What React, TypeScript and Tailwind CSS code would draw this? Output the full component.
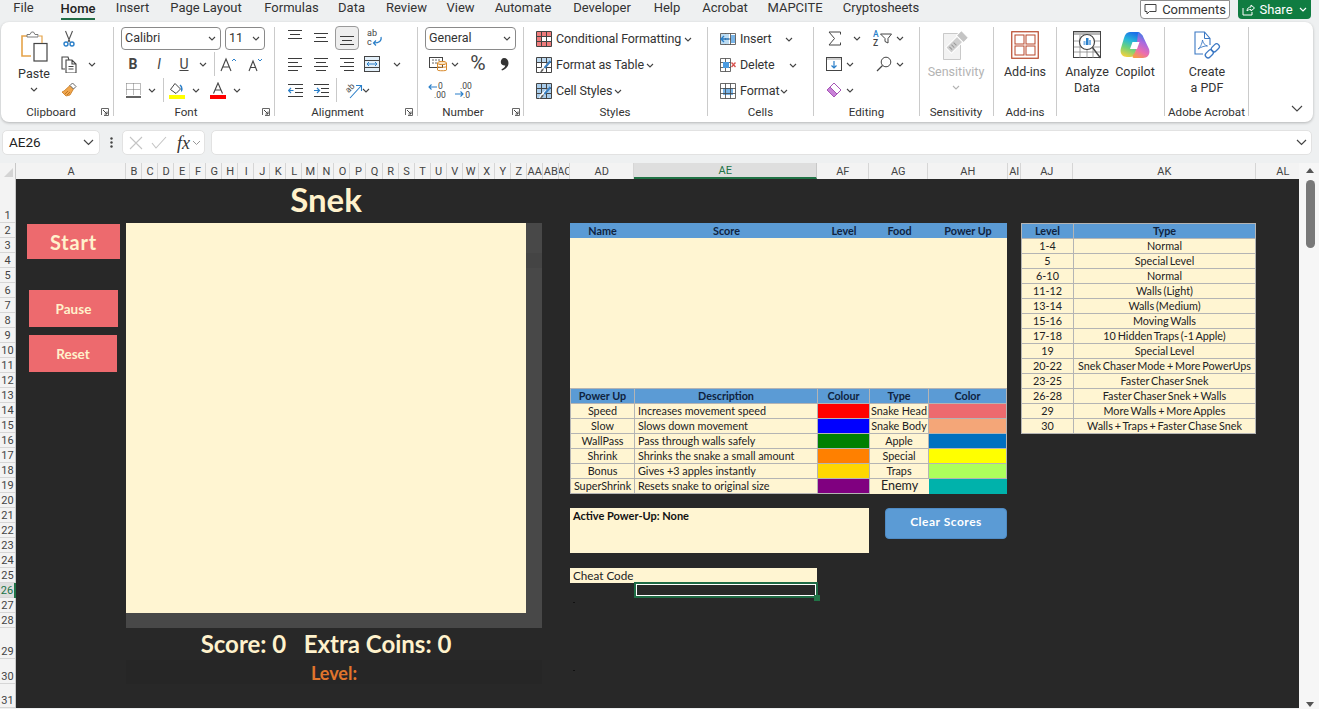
import React from "react";

type P = { c?: string; children?: React.ReactNode };
const S = ({ w = 16, h = 16, children }: { w?: number; h?: number; children?: React.ReactNode }) => (
  <svg width={w} height={h} viewBox={`0 0 ${w} ${h}`} fill="none" className="shrink-0">{children}</svg>
);
const Cell = ({ c = "", children }: P) => <div className={"flex items-center justify-center shrink-0 " + c}>{children}</div>;
const Chev = ({ color = "#444" }: { color?: string }) => (
  <svg width="8" height="5" viewBox="0 0 8 5" fill="none" className="shrink-0"><path d="M1 1l3 3 3-3" stroke={color} strokeWidth="1.1" /></svg>
);
const ChevC = ({ c = "" }: { c?: string }) => <Cell c={"w-[8px] " + c}><Chev /></Cell>;
const Sep = ({ c = "" }: { c?: string }) => <div className={"w-px h-[24px] bg-[#c9c9c9] shrink-0 " + c} />;
const R = ({ children }: P) => <div className="flex items-center h-[26px]">{children}</div>;
const L = "#3b3b3b";
const B = "#2a7fc9";

const Launcher = ({ c = "" }: { c?: string }) => (
  <svg width="8" height="8" viewBox="0 0 8 8" fill="none" className={"shrink-0 " + c}>
    <path d="M.5 7V.5H7.5V7.5H3" stroke="#666" /><path d="M2 2l4 4M6 3.5V6H3.5" stroke="#444" />
  </svg>
);

const Group = ({ w, label, lw, launcher, children }: { w: string; label?: string; lw?: string; launcher?: string; children?: React.ReactNode }) => (
  <div className={"h-[89px] border-r border-[#cbcbcb] shrink-0 flex flex-col " + w}>
    <div className="h-[78px] shrink-0">{children}</div>
    <div className="h-[14px] shrink-0 flex items-center text-[#333]">
      <div className={"text-center whitespace-nowrap text-[11.6px] leading-[14px] " + (lw || "")}>{label}</div>
      {launcher !== undefined && <Launcher c={launcher} />}
    </div>
  </div>
);

const Combo = ({ c, text }: { c: string; text: string }) => (
  <div className={"h-[23px] border border-[#8a8a8a] rounded-[4px] bg-white flex items-center justify-between pl-[3px] pr-[4px] text-[12.5px] text-[#333] shrink-0 " + c}>
    <span>{text}</span><Chev />
  </div>
);

/* icons */
const Paste = () => (
  <S w={28} h={31}>
    <path d="M9 5H2v20h9" stroke="#e5a349" strokeWidth="1.6" />
    <path d="M7 6V3.5h3l1.5-2.5h2l1.5 2.5h3V6z" fill="#fff" stroke="#7a7a7a" strokeWidth="1" />
    <rect x="14" y="12.5" width="13" height="17.5" fill="#fff" stroke="#444" strokeWidth="1.2" />
    <path d="M19 5h3v7" stroke="#e5a349" strokeWidth="1.2" />
  </S>
);
const Cut = () => (
  <S w={12} h={17}>
    <path d="M2.5 1l4.5 11M9.5 1L5 12" stroke="#555" strokeWidth="1.1" />
    <circle cx="3" cy="14" r="2" stroke={B} strokeWidth="1.4" /><circle cx="9" cy="14" r="2" stroke={B} strokeWidth="1.4" />
  </S>
);
const Copy = () => (
  <S w={16} h={17}>
    <path d="M4 13H1V1h6l1 3" stroke="#444" strokeWidth="1.1" />
    <path d="M5 4h6l4 4v9H5zM11 4v4h4M7.5 10.5h5M7.5 13h5" stroke="#444" strokeWidth="1.1" />
  </S>
);
const Painter = () => (
  <S w={16} h={16}>
    <path d="M9 3.5l3.5 3.5L9 13 5 14 1 10l2-1z" fill="#f0a64d" stroke="#c77a22" strokeWidth=".8" />
    <path d="M9 3.5l2.5-2.5 3.5 3.5-2.5 2.5z" fill="#fff" stroke="#666" />
    <path d="M4 12l3-3M6 13l3-3" stroke="#b56a17" strokeWidth=".8" />
  </S>
);
const Borders = () => (
  <S w={15} h={15}>
    <path d="M.5.5h14M.5.5v12M14.5.5v12M7.5.5v12M.5 6.5h14" stroke="#777" strokeDasharray="1 1" />
    <path d="M0 14h15" stroke="#222" strokeWidth="1.4" />
  </S>
);
const Fill = () => (
  <S w={16} h={17}>
    <path d="M6 1.5l5.5 5.5L7 11.5 1.5 7.5z" stroke="#444" fill="#fff" />
    <path d="M12 9c1 0 1.5-4-1-6" stroke={B} strokeWidth="1.6" />
    <rect x="0" y="13" width="16" height="4" fill="#ffff00" />
  </S>
);
const FontA = () => (
  <S w={16} h={17}>
    <path d="M3.5 11.5L8 1l4.5 10.5M5 8h6" stroke="#444" strokeWidth="1.1" />
    <rect x="0" y="13" width="16" height="4" fill="#ff0000" />
  </S>
);
const AUp = ({ up }: { up: boolean }) => (
  <S w={up ? 16 : 14} h={15}>
    <path d={up ? "M1 14L6 2l5 12M3 10h6" : "M1 14L5 4l4 10M2.7 10.5h5"} stroke="#444" strokeWidth="1.1" />
    <path d={up ? "M12 4l2-2 2 2" : "M10 2l2 2 2-2"} stroke={B} strokeWidth="1" />
  </S>
);
const Lines = ({ a }: { a: "l" | "c" | "r" | "t" | "m" | "b" }) => {
  const p: Record<string, string> = {
    l: "M0 2.5h14M0 6.5h10M0 10.5h14M0 14.5h10",
    c: "M0 2.5h14M2 6.5h10M0 10.5h14M2 14.5h10",
    r: "M0 2.5h14M4 6.5h10M0 10.5h14M4 14.5h10",
    t: "M0 .5h14M2 4.5h10M0 8.5h14",
    m: "M0 3.5h14M2 7.5h10M0 11.5h14",
    b: "M0 6.5h14M2 10.5h10M0 14.5h14",
  };
  return <S w={14} h={16}><path d={p[a]} stroke={L} strokeWidth="1" /></S>;
};
const Wrap = () => (
  <svg width="18" height="20" viewBox="0 0 18 20" fill="none" className="shrink-0">
    <text x="2" y="8" fontSize="9" fill="#444" fontFamily="Roboto">ab</text>
    <text x="2" y="17" fontSize="9" fill="#444" fontFamily="Roboto">c</text>
    <path d="M16 9c1 4-2 6-7 6M11 12.5L8.5 15l2.5 2.5" stroke={B} strokeWidth="1.2" />
  </svg>
);
const Merge = () => (
  <S w={16} h={16}>
    <rect x=".5" y=".5" width="15" height="15" fill="#e3f0fa" stroke="#444" />
    <path d="M.5 4.5h15M.5 11.5h15" stroke="#444" />
    <path d="M3 8h10M5 6L3 8l2 2M11 6l2 2-2 2" stroke={B} />
  </S>
);
const Indent = ({ out }: { out: boolean }) => (
  <S w={15} h={15}>
    <path d="M0 1.5h15M7 5.5h8M7 9.5h8M0 13.5h15" stroke={L} />
    <path d={out ? "M5.5 7.5H.5M3 5L.5 7.5 3 10" : "M0 7.5h5.5M3 5l2.5 2.5L3 10"} stroke={B} strokeWidth="1.2" />
  </S>
);
const Orient = () => (
  <svg width="20" height="20" viewBox="0 0 20 20" fill="none" className="shrink-0">
    <text x="3" y="11" fontSize="8.5" fill="#444" fontFamily="Roboto" transform="rotate(-45 7 9)">ab</text>
    <path d="M7 18L18 6M13 5.5h5.5V11" stroke={B} strokeWidth="1.1" />
  </svg>
);
const Accounting = () => (
  <S w={18} h={16}>
    <rect x=".5" y="1.5" width="13" height="10" fill="#fff" stroke="#444" />
    <path d="M3 4h8M3 7h6" stroke="#666" strokeDasharray="2 1" />
    <ellipse cx="13" cy="7" rx="4.5" ry="1.7" fill="#fbe3c2" stroke="#d98a2b" />
    <path d="M8.5 7v7c0 1 9 1 9 0V7M8.5 10.5c0 1 9 1 9 0" stroke="#d98a2b" fill="none" />
  </S>
);
const Dec = ({ inc }: { inc: boolean }) => (
  <svg width="20" height="19" viewBox="0 0 20 19" fill="none" className="shrink-0">
    {inc ? (
      <>
        <text x="7" y="8" fontSize="8.5" fill="#444" fontFamily="Roboto">.00</text>
        <text x="10" y="17" fontSize="8.5" fill="#444" fontFamily="Roboto">.0</text>
        <path d="M2 13h8M7.5 10.5L10 13l-2.5 2.5" stroke={B} strokeWidth="1.1" />
      </>
    ) : (
      <>
        <text x="11" y="8" fontSize="8.5" fill="#444" fontFamily="Roboto">0</text>
        <text x="7" y="17" fontSize="8.5" fill="#444" fontFamily="Roboto">.00</text>
        <path d="M2 6h8M4.5 3.5L2 6l2.5 2.5" stroke={B} strokeWidth="1.1" />
      </>
    )}
  </svg>
);
const Comma = () => (
  <S w={9} h={14}>
    <path d="M4 1c2.7 0 4.5 2 4.5 5 0 3.5-2.7 6-6.5 7.5l-.6-1.1c2.100-1 3.500-2.300 3.900-3.900C2.500 8.700.8 7.300.8 5 .8 2.700 2.200 1 4 1z" fill="#333" />
  </S>
);
const GridI = ({ kind }: { kind: "cf" | "tbl" | "cs" | "ins" | "del" | "fmt" }) => {
  const g = "M.5 .5h15v15H.5zM5.5 .5v15M10.5 .5v15M.5 5.5h15M.5 10.5h15";
  return (
    <S w={16} h={16}>
      {kind === "cf" && <path d="M1 1h14v4H1zM1 11h14v4H1zM1 5h5v6H1z" fill="#ef7b7b" />}
      {kind === "tbl" && <path d="M1 1h14v4H1z" fill="#bcd9f0" />}
      {kind === "cs" && <path d="M1 1h14v14H1z" fill="#a9cdec" />}
      {kind === "fmt" && <path d="M3 5h10v7H3z" fill="#79b5e8" />}
      {(kind === "cf" || kind === "tbl" || kind === "cs" || kind === "fmt") && <path d={g} stroke="#444" strokeWidth={kind === "fmt" ? 0.8 : 1} />}
      {(kind === "tbl" || kind === "cs") && (
        <>
          <path d="M15 3L8 11l-2 3-3 1.5 1-3 2-2.5z" fill="#fff" />
          <path d="M14.5 4L8.5 11" stroke="#3a7fc0" strokeWidth="2" />
          <path d="M8 11l-2.5 1.5L4 15.5l3-1.5z" fill="#666" />
        </>
      )}
      {kind === "ins" && (
        <>
          <path d="M.5 2.5h15v11H.5zM5.5 2.5v11M10.5 2.5v11M.5 8h15" stroke="#444" strokeWidth=".8" />
          <path d="M1 3h8v4H1zM1 9h8v4H1z" fill="#bcdcf3" />
          <path d="M9 8H1M4 5L1 8l3 3" stroke="#2a7fc9" strokeWidth="1.4" />
          <path d="M11 4h4v8h-4z" fill="#79b5e8" />
        </>
      )}
      {kind === "del" && (
        <>
          <path d="M.5 1.5h10v13H.5zM5.5 1.5v13M.5 5.5h10M.5 10.5h10" stroke="#444" strokeWidth=".8" />
          <path d="M3 5h6v6H3z" fill="#4b9be0" />
          <path d="M11.5 5.5l4 4.5M15.5 5.5l-4 4.5" stroke="#d9534f" strokeWidth="1.4" />
        </>
      )}
    </S>
  );
};
const Sigma = () => <S w={13} h={15}><path d="M12.5 3.5V1H1l5.5 6.5L1 14h11.5v-2.500" stroke="#444" strokeWidth="1" /></S>;
const FillDown = () => (
  <S w={16} h={14}>
    <rect x=".5" y=".5" width="15" height="13" stroke="#444" /><path d="M1 1h14v2H1z" fill="#cfcfcf" />
    <path d="M8 4v7M5.5 8.5L8 11l2.5-2.5" stroke={B} strokeWidth="1.2" />
  </S>
);
const Sort = () => (
  <svg width="20" height="18" viewBox="0 0 20 18" fill="none" className="shrink-0">
    <text x="0" y="8" fontSize="8.5" fill={B} fontFamily="Roboto" fontWeight="500">A</text>
    <text x="0" y="17" fontSize="8.5" fill="#444" fontFamily="Roboto" fontWeight="500">Z</text>
    <path d="M7.5 5h11L15 9.5V14l-3-1.5v-3z" stroke="#444" />
  </svg>
);
const Find = () => <S w={16} h={16}><circle cx="10" cy="6" r="4.8" stroke="#444" /><path d="M6.5 9.5L1 15" stroke="#444" strokeWidth="1.2" /></S>;
const Eraser = () => (
  <S w={16} h={16}>
    <path d="M8 1l7 7-4 4-7-7z" fill="#fff" stroke="#a554b5" />
    <path d="M4 5l7 7-3 3-7-7z" fill="#c982d8" stroke="#a554b5" />
  </S>
);
const Sens = () => (
  <S w={27} h={30}>
    <path d="M0 3h17v27H0z" fill="#f2f2f2" /><path d="M.5 3.5h17v26H.5z" stroke="#c9c9c9" />
    <g transform="rotate(-45 12 14)">
      <path d="M3 10h16v8H3z" fill="#cfcfcf" stroke="#fff" />
      <path d="M6 12v4M9 12v4M12 12v4" stroke="#9a9a9a" />
      <path d="M19 9h7v10h-7z" fill="#c4c4c4" stroke="#fff" />
    </g>
  </S>
);
const AddIns = () => (
  <S w={28} h={28}>
    <rect x=".75" y=".75" width="26.5" height="26.5" stroke="#b7472a" strokeWidth="1.2" />
    <rect x="4" y="4" width="9" height="9" stroke="#b7472a" /><rect x="15" y="4" width="9" height="9" stroke="#b7472a" />
    <rect x="4" y="15" width="9" height="9" stroke="#b7472a" /><rect x="15" y="15" width="9" height="9" stroke="#b7472a" />
  </S>
);
const Analyze = () => (
  <S w={28} h={28}>
    <rect x=".5" y=".5" width="27" height="26" fill="#fff" stroke="#444" />
    <path d="M1 1h26v3H1z" fill="#b8b8b8" />
    <path d="M1 10h26M1 16h26M1 21h26M7 4v23M14 16v11M20 16v11" stroke="#888" strokeWidth=".8" />
    <circle cx="14" cy="11" r="7.5" fill="#fff" stroke="#444" strokeWidth="1.2" />
    <path d="M10.5 10h2v4h-2z" fill="#7fb5e6" /><path d="M13 7h2.5v7H13z" fill="#2a7fc9" /><path d="M16 9h2v5h-2z" fill="#7fb5e6" />
    <path d="M19.5 16.5L27.5 27" stroke="#444" strokeWidth="1.4" />
  </S>
);
const Copilot = () => (
  <svg width="30" height="28" viewBox="0 0 30 28" className="shrink-0">
    <defs>
      <linearGradient id="cpA" x1="0.6" y1="0" x2="0.3" y2="1">
        <stop offset="0" stopColor="#1b6fe8" /><stop offset=".35" stopColor="#27b8d8" /><stop offset=".65" stopColor="#6fd27a" /><stop offset="1" stopColor="#f3d13f" />
      </linearGradient>
      <linearGradient id="cpB" x1="0.7" y1="0" x2="0.3" y2="1">
        <stop offset="0" stopColor="#2a7de8" /><stop offset=".35" stopColor="#a86be0" /><stop offset=".7" stopColor="#ec6db0" /><stop offset="1" stopColor="#f59a4b" />
      </linearGradient>
    </defs>
    <path d="M10 1h8c2 0 3 1.5 2.5 3.5L16 20c-1 4-3 6-6 6H7c-5 0-7.5-4-6-9L4 7c1-4 3-6 6-6z" fill="url(#cpA)" />
    <path d="M18 2c3 0 4.5 1.5 5.5 4.5L29 18c1.5 5-1 9-6 9h-8c-2.5 0-3-1.5-2-3 2-2 2.5-4 3.5-7z" fill="url(#cpB)" />
    <path d="M12.5 11h7l-2.5 7h-7z" fill="#fff" />
  </svg>
);
const Pdf = () => (
  <S w={27} h={29}>
    <path d="M16 14V7.5L10.5 1H1v22h8" stroke="#3b78c4" strokeWidth="1.1" />
    <path d="M10.5 1v6.5H16" stroke="#3b78c4" strokeWidth="1" />
    <path d="M4 18c2-1 4-5 4.5-9 .5 3 2 5 5 6-3-.2-6 .8-9.5 3z" stroke="#3b78c4" strokeWidth=".9" />
    <g stroke="#3b78c4" strokeWidth="1.3" fill="none">
      <rect x="17" y="14" width="9" height="5.5" rx="2.7" transform="rotate(-45 21.5 17)" />
      <rect x="11" y="20" width="9" height="5.5" rx="2.7" transform="rotate(-45 15.5 23)" />
    </g>
  </S>
);

const SmallRow = ({ icon, text, tw, chev }: { icon: React.ReactNode; text: string; tw?: string; chev?: string }) => (
  <div className="flex items-center h-[26px] pl-[12px]">
    {icon}
    <span className={"ml-[4px] text-[12.5px] tracking-[-0.1px] whitespace-nowrap text-[#333] " + (tw || "")}>{text}</span>
    <Cell c={"w-[8px] " + (chev || "")}><Chev /></Cell>
  </div>
);

const Big = ({ c, icon, lines, gray, chev }: { c: string; icon: React.ReactNode; lines: string[]; gray?: boolean; chev?: boolean }) => (
  <div className={"flex flex-col items-center pt-[4px] shrink-0 " + c}>
    <div className="h-[28px] flex items-center">{icon}</div>
    <div className={"mt-[5px] flex flex-col items-center text-[12.5px] leading-[16px] whitespace-nowrap " + (gray ? "text-[#b3b3b3]" : "text-[#333]")}>
      {lines.map((l) => <span key={l}>{l}</span>)}
    </div>
    {chev && <div className="mt-[5px]"><Chev color="#b3b3b3" /></div>}
  </div>
);

const tabs: [string, string][] = [
  ["File", "w-[47px]"], ["Home", "w-[62px]"], ["Insert", "w-[47px]"], ["Page Layout", "w-[100px]"], ["Formulas", "w-[71px]"],
  ["Data", "w-[49px]"], ["Review", "w-[61px]"], ["View", "w-[47px]"], ["Automate", "w-[78px]"], ["Developer", "w-[80px]"],
  ["Help", "w-[50px]"], ["Acrobat", "w-[66px]"], ["MAPCITE", "w-[74px]"], ["Cryptosheets", "w-[98px]"],
];

const Ribbon = () => (
  <div className="ml-px w-[1312px] h-[100px] bg-white rounded-lg shadow-[0_1px_3px_rgba(0,0,0,0.25)] flex pt-[5px] shrink-0">
    <Group w="w-[113px]" label="Clipboard" lw="w-[100px]" launcher="">
      <div className="flex -mt-[2px]">
        <div className="ml-[6px] w-[54px] flex flex-col items-center pt-[6px] shrink-0">
          <Paste />
          <span className="text-[12.5px] leading-[16px] mt-[4px] text-[#333]">Paste</span>
          <div className="mt-[5px]"><Chev /></div>
        </div>
        <div className="flex flex-col">
          <R><Cell c="w-[16px]"><Cut /></Cell></R>
          <R><Cell c="w-[16px]"><Copy /></Cell><ChevC c="ml-[11px]" /></R>
          <R><Cell c="w-[16px]"><Painter /></Cell></R>
        </div>
      </div>
    </Group>
    <Group w="w-[161px]" label="Font" lw="w-[144px]" launcher="ml-[4px]">
      <div className="flex flex-col -mt-[2px]">
        <R><Combo c="ml-[7px] w-[100px]" text="Calibri" /><Combo c="ml-[4px] w-[40px]" text="11" /></R>
        <R>
          <Cell c="ml-[9px] w-[20px] font-bold text-[14px] text-[#444]">B</Cell>
          <Cell c="ml-[6px] w-[20px] italic text-[14px] text-[#444]">I</Cell>
          <Cell c="ml-[5px] w-[20px] underline text-[14px] text-[#444]">U</Cell>
          <ChevC c="ml-[5px]" /><Sep c="ml-[7px]" />
          <Cell c="ml-[3px] w-[20px]"><AUp up /></Cell><Cell c="ml-[7px] w-[20px]"><AUp up={false} /></Cell>
        </R>
        <R>
          <Cell c="ml-[9px] w-[20px]"><Borders /></Cell><ChevC c="ml-[5px]" /><Sep c="ml-[7px]" />
          <Cell c="ml-[3px] w-[20px]"><Fill /></Cell><ChevC c="ml-[5px]" />
          <Cell c="ml-[8px] w-[20px]"><FontA /></Cell><ChevC c="ml-[5px]" />
        </R>
      </div>
    </Group>
    <Group w="w-[143px]" label="Alignment" lw="w-[125px]" launcher="ml-[5px]">
      <div className="flex flex-col -mt-[2px]">
        <R>
          <Cell c="ml-[10px] w-[20px]"><Lines a="t" /></Cell><Cell c="ml-[6px] w-[20px]"><Lines a="m" /></Cell>
          <Cell c="ml-[4px] w-[24px] h-[24px] bg-[#eeeeee] border border-[#9a9a9a] rounded-[4px]"><Lines a="b" /></Cell>
          <Cell c="ml-[5px] w-[20px]"><Wrap /></Cell>
        </R>
        <R>
          <Cell c="ml-[10px] w-[20px]"><Lines a="l" /></Cell><Cell c="ml-[6px] w-[20px]"><Lines a="c" /></Cell>
          <Cell c="ml-[6px] w-[20px]"><Lines a="r" /></Cell><Cell c="ml-[5px] w-[20px]"><Merge /></Cell><ChevC c="ml-[11px]" />
        </R>
        <R>
          <Cell c="ml-[10px] w-[20px]"><Indent out /></Cell><Cell c="ml-[6px] w-[20px]"><Indent out={false} /></Cell><Sep c="ml-[5px]" />
          <Cell c="ml-[6px] w-[20px]"><Orient /></Cell><ChevC c="-ml-[1px]" />
        </R>
      </div>
    </Group>
    <Group w="w-[106px]" label="Number" lw="w-[90px]" launcher="ml-[4px]">
      <div className="flex flex-col -mt-[2px]">
        <R><Combo c="ml-[7px] w-[91px]" text="General" /></R>
        <R>
          <Cell c="ml-[10px] w-[20px]"><Accounting /></Cell><ChevC c="ml-[3px]" />
          <Cell c="ml-[9px] w-[20px] text-[21px] text-[#444]">%</Cell>
          <Cell c="ml-[6px] w-[20px]"><Comma /></Cell>
        </R>
        <R><Cell c="ml-[9px] w-[20px]"><Dec inc={false} /></Cell><Cell c="ml-[6px] w-[20px]"><Dec inc /></Cell></R>
      </div>
    </Group>
    <Group w="w-[184px]" label="Styles" lw="w-[182px]">
      <div className="flex flex-col -mt-[1px]">
        <SmallRow icon={<GridI kind="cf" />} text="Conditional Formatting" chev="ml-[3px]" />
        <SmallRow icon={<GridI kind="tbl" />} text="Format as Table" chev="ml-[2px]" />
        <SmallRow icon={<GridI kind="cs" />} text="Cell Styles" chev="ml-[2px]" />
      </div>
    </Group>
    <Group w="w-[106px]" label="Cells" lw="w-[106px]">
      <div className="flex flex-col -mt-[1px]">
        <SmallRow icon={<GridI kind="ins" />} text="Insert" tw="w-[45px]" />
        <SmallRow icon={<GridI kind="del" />} text="Delete" tw="w-[49px]" />
        <SmallRow icon={<GridI kind="fmt" />} text="Format" tw="w-[40px]" />
      </div>
    </Group>
    <Group w="w-[106px]" label="Editing" lw="w-[106px]">
      <div className="flex flex-col -mt-[2px]">
        <R><Cell c="ml-[10px] w-[20px]"><Sigma /></Cell><ChevC c="ml-[9px]" /><Cell c="ml-[12px] w-[20px]"><Sort /></Cell><ChevC c="ml-[3px]" /></R>
        <R><Cell c="ml-[10px] w-[20px]"><FillDown /></Cell><ChevC c="ml-[2px]" /><Cell c="ml-[20px] w-[20px]"><Find /></Cell><ChevC c="ml-[2px]" /></R>
        <R><Cell c="ml-[10px] w-[20px]"><Eraser /></Cell><ChevC c="ml-[2px]" /></R>
      </div>
    </Group>
    <Group w="w-[74px]" label="Sensitivity" lw="w-[72px]">
      <Big c="w-[72px]" icon={<Sens />} lines={["Sensitivity"]} gray chev />
    </Group>
    <Group w="w-[63px]" label="Add-ins" lw="w-[62px]">
      <Big c="w-[62px]" icon={<AddIns />} lines={["Add-ins"]} />
    </Group>
    <Group w="w-[108px]">
      <div className="flex">
        <Big c="w-[60px]" icon={<Analyze />} lines={["Analyze", "Data"]} />
        <Big c="w-[36px]" icon={<Copilot />} lines={["Copilot"]} />
      </div>
    </Group>
    <Group w="w-[84px]" label="Adobe Acrobat" lw="w-[84px]">
      <Big c="w-[84px]" icon={<Pdf />} lines={["Create", "a PDF"]} />
    </Group>
    <div className="flex-1 flex justify-end items-end pr-[10px] pb-[10px]">
      <svg width="12" height="7" viewBox="0 0 12 7" fill="none"><path d="M1 1l5 5 5-5" stroke="#444" strokeWidth="1.1" /></svg>
    </div>
  </div>
);

const FormulaBar = () => (
  <div className="flex mt-[8px] h-[25px] shrink-0 items-stretch">
    <div className="ml-[2px] w-[98px] bg-white rounded-[5px] border border-[#e2e2e2] flex items-center justify-between pl-[6px] pr-[5px] text-[13.5px] text-[#222]">
      <span>AE26</span>
      <svg width="11" height="7" viewBox="0 0 11 7" fill="none"><path d="M1 1l4.5 4.5L10 1" stroke="#444" strokeWidth="1.2" /></svg>
    </div>
    <div className="w-[22px] flex items-center justify-center">
      <svg width="3" height="11" viewBox="0 0 3 11"><circle cx="1.5" cy="1.5" r="1.2" fill="#444" /><circle cx="1.5" cy="5.5" r="1.2" fill="#444" /><circle cx="1.5" cy="9.5" r="1.2" fill="#444" /></svg>
    </div>
    <div className="w-[83px] bg-white rounded-[5px] border border-[#e2e2e2] flex items-center pl-[6px]">
      <svg width="14" height="14" viewBox="0 0 14 14" fill="none"><path d="M1 1l12 12M13 1L1 13" stroke="#c4c4c4" strokeWidth="1.1" /></svg>
      <svg width="16" height="13" viewBox="0 0 16 13" fill="none" className="ml-[8px]"><path d="M1 7l4 5L15 1" stroke="#c4c4c4" strokeWidth="1.1" /></svg>
      <span className="ml-[10px] font-['Liberation_Serif',serif] italic text-[18px] text-[#333] leading-none">fx</span>
      <svg width="9" height="6" viewBox="0 0 9 6" fill="none" className="ml-[2px]"><path d="M1 1l3.5 3.5L8 1" stroke="#999" strokeWidth="1" /></svg>
    </div>
    <div className="ml-[6px] w-[1101px] bg-white rounded-[5px] border border-[#e2e2e2] flex items-center justify-end pr-[4px]">
      <svg width="11" height="7" viewBox="0 0 11 7" fill="none"><path d="M1 1l4.5 4.5L10 1" stroke="#444" strokeWidth="1.2" /></svg>
    </div>
  </div>
);

const cols = ["A", ..."BCDEFGHIJKLMNOPQRSTUVWXYZ".split(""), "AA", "AB", "AC", "AD", "AE", "AF", "AG", "AH", "AI", "AJ", "AK", "AL"];

const ColHeader = () => (
  <div className="flex h-[16px] bg-[#f3f3f3] shrink-0 overflow-hidden">
    <div className="w-[16px] border-r border-[#c8c8c8] flex items-end justify-end p-[2px] shrink-0">
      <div className="w-0 h-0 border-l-[9px] border-l-transparent border-b-[9px] border-b-[#d4d4d4]" />
    </div>
    <div className="grid grid-cols-[110px_repeat(25,16.04px)_16px_16px_11px_64px_183px_52px_59px_80px_13px_52px_183px_54px] shrink-0">
      {cols.map((c) => (
        <div key={c} className={"flex items-center justify-center overflow-hidden whitespace-nowrap border-r pl-px pt-[2px] text-[11px] " + (c === "AE" ? "bg-[#dedede] text-[#217346] border-[#c8c8c8] border-b-2 border-b-[#217346]" : "text-[#444] border-[#d6d6d6]")}>{c}</div>
      ))}
    </div>
  </div>
);

const rowH = (n: number) => (n === 1 ? "h-[44px]" : n === 29 ? "h-[31px]" : n === 30 ? "h-[25px]" : n === 31 ? "h-[24px]" : "h-[15px]");
const RowHeader = () => (
  <div className="w-[16px] flex flex-col bg-[#f3f3f3] shrink-0">
    {Array.from({ length: 31 }, (_, i) => i + 1).map((n) => (
      <div key={n} className={"flex items-end justify-center leading-[14px] text-[11px] shadow-[inset_0_-1px_0_#d6d6d6] " + rowH(n) + (n === 26 ? " bg-[#dedede] text-[#217346] border-r-2 border-r-[#217346]" : " text-[#444] border-r border-r-[#c8c8c8]")}>{n}</div>
    ))}
  </div>
);

const Btn = ({ c, text }: { c: string; text: string }) => (
  <div className={"bg-[#ed6a6e] text-[#fff2cc] font-bold flex items-center justify-center " + c}>{text}</div>
);

const cellB = "border-r border-b border-[#b4b4b4] flex items-center overflow-hidden whitespace-nowrap";
const powers: [string, string, string, string, string][] = [
  ["Speed", "Increases movement speed", "bg-[#ff0000]", "Snake Head", "bg-[#ed6a6e]"],
  ["Slow", "Slows down movement", "bg-[#0000ff]", "Snake Body", "bg-[#f4a678]"],
  ["WallPass", "Pass through walls safely", "bg-[#008000]", "Apple", "bg-[#0070c0]"],
  ["Shrink", "Shrinks the snake a small amount", "bg-[#ff8000]", "Special", "bg-[#ffff00]"],
  ["Bonus", "Gives +3 apples instantly", "bg-[#ffd700]", "Traps", "bg-[#adff5c]"],
  ["SuperShrink", "Resets snake to original size", "bg-[#800080]", "Enemy", "bg-[#00b2ab]"],
];
const levels: [string, string][] = [
  ["1-4", "Normal"], ["5", "Special Level"], ["6-10", "Normal"], ["11-12", "Walls (Light)"], ["13-14", "Walls (Medium)"],
  ["15-16", "Moving Walls"], ["17-18", "10 Hidden Traps (-1 Apple)"], ["19", "Special Level"], ["20-22", "Snek Chaser Mode + More PowerUps"],
  ["23-25", "Faster Chaser Snek"], ["26-28", "Faster Chaser Snek + Walls"], ["29", "More Walls + More Apples"], ["30", "Walls + Traps + Faster Chase Snek"],
];
const Head = ({ t }: { t: string }) => <div className={"bg-[#5b9bd5] font-bold text-[#0f2340] justify-center " + cellB}>{t}</div>;
const Td = ({ t, left }: { t: string; left?: boolean }) => <div className={"bg-[#fff5d2] text-[#222] " + cellB + (left ? " pl-[3px]" : " justify-center")}>{t}</div>;

const Sheet = () => (
  <div className="flex-1 bg-[#282828] flex font-['Lato',sans-serif] text-[10.8px] leading-none">
    <div className="w-[110px] shrink-0 flex flex-col pt-[45px]">
      <Btn c="ml-[11px] w-[93px] h-[35px] text-[20px] tracking-[0.8px]" text="Start" />
      <Btn c="ml-[13px] mt-[31px] w-[89px] h-[37px] pt-[2px] text-[13.5px]" text="Pause" />
      <Btn c="ml-[13px] mt-[8px] w-[88px] h-[37px] pt-[2px] text-[13.5px]" text="Reset" />
    </div>
    <div className="w-[416px] shrink-0 flex flex-col">
      <div className="w-[400px] h-[44px] pb-[3px] flex items-center justify-center text-[#fff2cc] font-bold text-[33px]">Snek</div>
      <div className="flex">
        <div className="w-[400px] h-[390px] bg-[#fff5d2]" />
        <div className="w-[16px] h-[390px] bg-[#484848] pt-[30px]"><div className="h-[15px] bg-[#444444]" /></div>
      </div>
      <div className="h-[15px] bg-[#484848]" />
      <div className="w-[400px] h-[32px] flex items-center justify-center whitespace-pre text-[#fff2cc] font-bold text-[24px]">Score: 0   Extra Coins: 0</div>
      <div className="h-[24px] bg-[#262626] flex items-center justify-center pt-[2px] text-[#e0752c] font-bold text-[18px]">Level:</div>
    </div>
    <div className="ml-[28px] w-[438px] shrink-0 flex flex-col pt-[44px]">
      <div className="w-[437px] grid grid-cols-[65px_183px_52px_59px_78px] auto-rows-[15px]">
        {["Name", "Score", "Level", "Food", "Power Up"].map((t) => (
          <div key={t} className="bg-[#5b9bd5] font-bold text-[#0f2340] flex items-center justify-center pt-px">{t}</div>
        ))}
      </div>
      <div className="w-[437px] h-[150px] bg-[#fff5d2]" />
      <div className="w-[437px] grid grid-cols-[64px_183px_52px_59px_78px] auto-rows-[15px] border-l border-t border-[#b4b4b4]">
        {["Power Up", "Description", "Colour", "Type", "Color"].map((t) => <Head key={t} t={t} />)}
        {powers.map(([a, b, c, d, e]) => (
          <React.Fragment key={a}>
            <Td t={a} /><Td t={b} left />
            <div className={c + " border-r border-b border-[#b4b4b4]"} />
            {d === "Enemy" ? <div className="text-[12.5px] text-[#222] bg-[#fff5d2] flex items-center justify-center">{d}</div> : <Td t={d} />}
            <div className={e + (d === "Enemy" ? "" : " border-r border-b border-[#b4b4b4]")} />
          </React.Fragment>
        ))}
      </div>
      <div className="flex mt-[14px]">
        <div className="w-[299px] h-[45px] bg-[#fff5d2] font-bold text-[#111] pl-[3px] pt-[2px] leading-[12px] text-[11px]">Active Power-Up: None</div>
        <div className="ml-[16px] w-[122px] h-[31px] bg-[#5b9bd5] rounded-[4px] border border-[#4f8bc4] text-white font-bold text-[12px] tracking-[0.5px] flex items-center justify-center pb-[4px]">Clear Scores</div>
      </div>
      <div className="mt-[15px] w-[247px] h-[15px] bg-[#fff5d2] flex items-center pl-[3px] text-[11.7px] text-[#222]">Cheat Code</div>
      <div className="flex items-end pl-[64px] h-[15px]">
        <div className="w-[184px] h-[16px] shrink-0 border-2 border-[#1f6b45] bg-[#282828] shadow-[inset_0_0_0_1px_#ffffff]" />
        <div className="w-[6px] h-[6px] shrink-0 bg-[#217346] -ml-[4px] -mb-[3px]" />
      </div>
      <div className="ml-[3px] mt-[4px] w-[2px] h-px bg-[#111]" />
      <div className="ml-[3px] mt-[67px] w-[2px] h-px bg-[#111]" />
    </div>
    <div className="ml-[13px] w-[235px] shrink-0 pt-[44px] [word-spacing:-0.9px]">
      <div className="grid grid-cols-[52px_182px] auto-rows-[15px] border-l border-t border-[#b4b4b4] w-[235px]">
        <Head t="Level" /><Head t="Type" />
        {levels.map(([a, b]) => (
          <React.Fragment key={a}><Td t={a} /><Td t={b} /></React.Fragment>
        ))}
      </div>
    </div>
  </div>
);

export default function App() {
  return (
    <div className="w-[1319px] h-[709px] overflow-hidden bg-[#eef0f1] flex flex-col font-['Roboto',sans-serif] text-[#333]">
      <div className="flex h-[22px] shrink-0 items-start">
        {tabs.map(([t, w]) => (
          <div key={t} className={"h-[20px] flex flex-col items-center justify-center text-[13px] leading-[16px] " + w + (t === "Home" ? " font-medium text-[#222]" : " text-[#333]")}>
            <span className={t === "Home" ? "border-b-2 border-[#1f6b45] -mb-[2px] h-[19px] -mt-[1px]" : "-mt-[5px]"}>{t}</span>
          </div>
        ))}
        <div className="ml-[210px] w-[90px] h-[19px] bg-white border border-[#8f8f8f] rounded-b-[4px] flex items-center justify-center text-[13px] text-[#333]">
          <svg width="13" height="13" viewBox="0 0 13 13" fill="none" className="mr-[5px]"><path d="M1 1.5h11v7H5.5L3 11V8.5H1z" stroke="#444" /></svg>
          Comments
        </div>
        <div className="ml-[8px] w-[73px] h-[19px] bg-[#107c41] rounded-b-[4px] flex items-center justify-center text-[13px] text-white">
          <svg width="13" height="13" viewBox="0 0 13 13" fill="none" className="mr-[4px]"><path d="M1 5v7h9V9M5 8c0-3 2-4 4-4V2l3.5 3L9 8V6.5C7 6.5 6 7 5 8z" stroke="#fff" /></svg>
          Share
          <svg width="8" height="5" viewBox="0 0 8 5" fill="none" className="ml-[6px]"><path d="M1 1l3 3 3-3" stroke="#fff" strokeWidth="1.2" /></svg>
        </div>
      </div>
      <Ribbon />
      <FormulaBar />
      <div className="flex mt-[8px] h-[546px] shrink-0">
        <div className="w-[1299px] shrink-0 flex flex-col">
          <ColHeader />
          <div className="flex h-[529px] shrink-0">
            <RowHeader />
            <Sheet />
          </div>
        </div>
        <div className="w-[20px] bg-[#f6f6f6] flex flex-col items-center pl-[2px] pt-[5px]">
          <div className="w-0 h-0 border-l-[4px] border-r-[4px] border-b-[5px] border-l-transparent border-r-transparent border-b-[#555]" />
          <div className="mt-[7px] w-[9px] h-[68px] rounded-full bg-[#787878]" />
          <div className="mt-auto mb-[2px] w-0 h-0 border-l-[4px] border-r-[4px] border-t-[5px] border-l-transparent border-r-transparent border-t-[#555]" />
        </div>
      </div>
    </div>
  );
}
